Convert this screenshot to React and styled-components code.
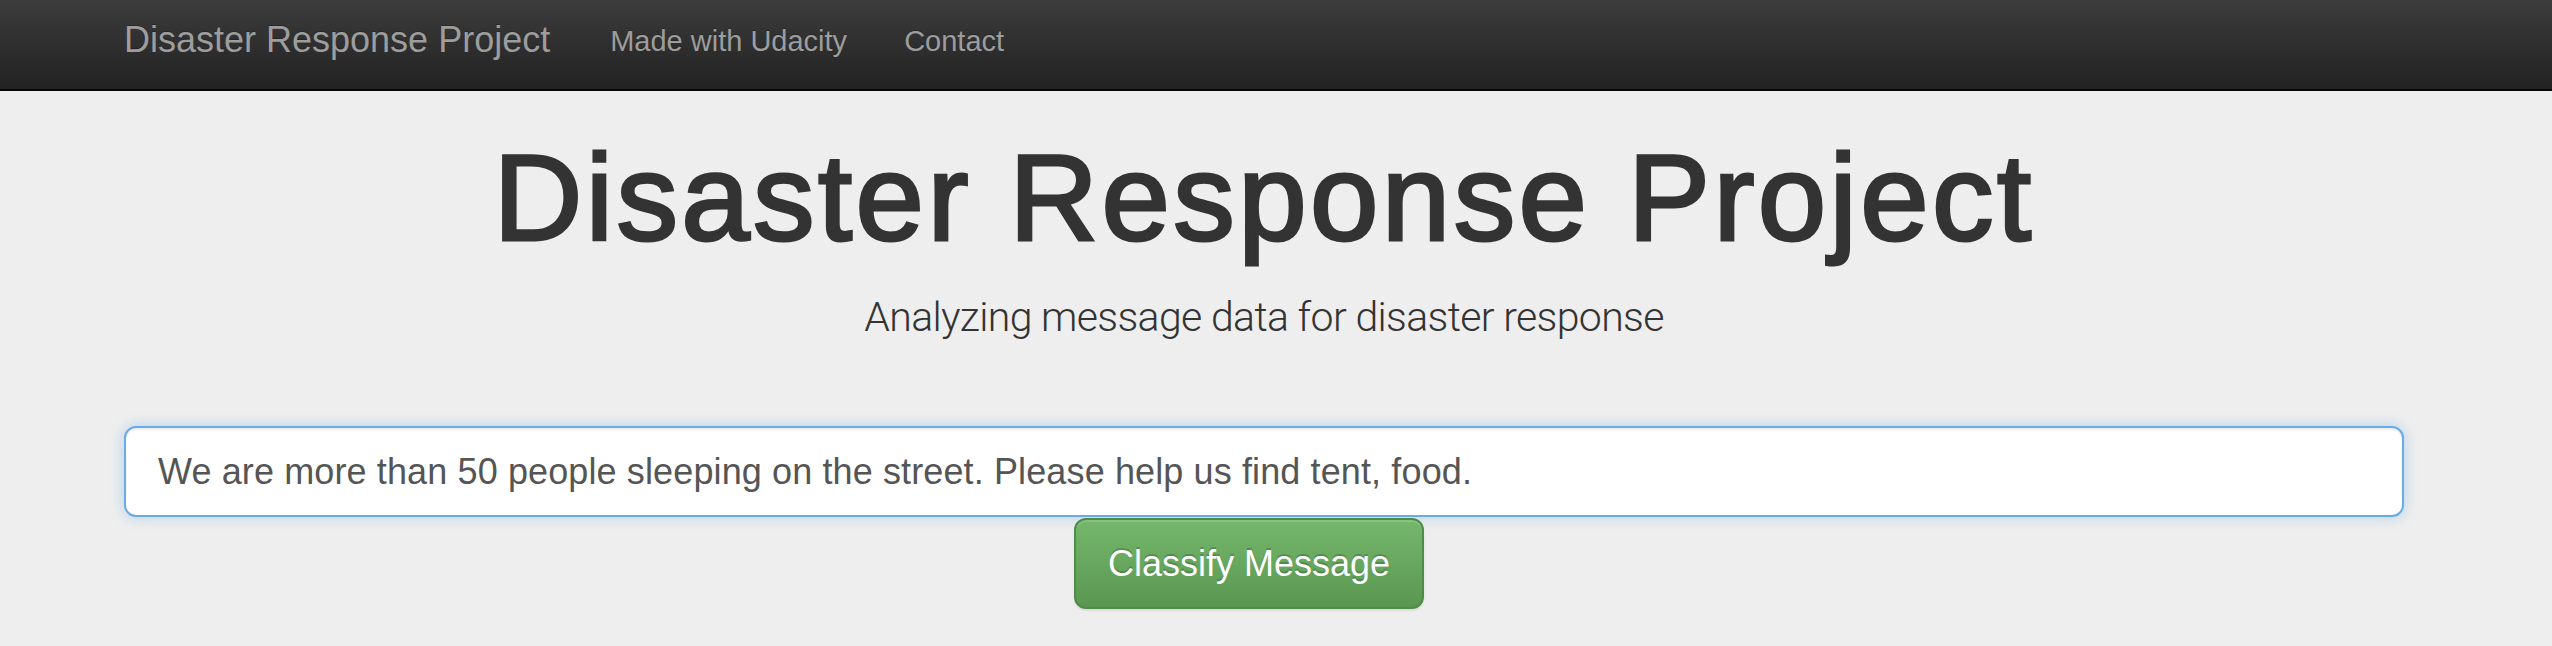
import React, { useEffect, useRef } from "react";
import styled, { createGlobalStyle } from "styled-components";

const GlobalStyle = createGlobalStyle`
  html, body {
    margin: 0;
    padding: 0;
    background: #eeeeee;
    font-family: "Liberation Sans", Arial, Helvetica, sans-serif;
  }
  * { box-sizing: border-box; }
`;

const Navbar = styled.nav`
  height: 91px;
  background: linear-gradient(to bottom, #3c3c3c 0%, #222222 100%);
  border-bottom: 2px solid #080808;
`;

const Container = styled.div`
  width: 2340px;
  margin-left: 94px;
  padding: 0 30px;
`;

const NavInner = styled(Container)`
  display: flex;
  align-items: flex-start;
`;

const Brand = styled.a`
  display: block;
  padding-top: 20px;
  font-size: 36px;
  line-height: 40px;
  color: #9d9d9d;
  text-decoration: none;
  white-space: nowrap;
  text-shadow: 0 -1px 0 rgba(0, 0, 0, 0.25);
`;

const NavList = styled.ul`
  display: flex;
  gap: 57px;
  margin: 0 0 0 60px;
  padding: 0;
  list-style: none;
`;

const NavLink = styled.a`
  display: block;
  padding-top: 21px;
  font-size: 29px;
  line-height: 40px;
  color: #9d9d9d;
  text-decoration: none;
  white-space: nowrap;
  text-shadow: 0 -1px 0 rgba(0, 0, 0, 0.25);
`;

const Jumbotron = styled.main`
  padding-top: 37px;
  padding-bottom: 40px;
`;

const Title = styled.h1`
  margin: 0;
  text-align: center;
  font-size: 123px;
  line-height: 140px;
  font-weight: 400;
  letter-spacing: 3.4px;
  color: #333333;
  -webkit-text-stroke: 3px #333333;
`;

const Lead = styled.p`
  margin: 19px 0 0;
  text-align: center;
  font-family: Roboto, "Liberation Sans", sans-serif;
  font-weight: 300;
  font-size: 41px;
  line-height: 60px;
  letter-spacing: -0.65px;
  color: #333333;
`;

const Form = styled.form`
  margin-top: 79px;
  display: flex;
  flex-direction: column;
`;

const MessageInput = styled.input`
  display: block;
  width: 100%;
  height: 91px;
  padding: 0 32px;
  font-family: "Liberation Sans", Arial, sans-serif;
  font-size: 36px;
  letter-spacing: 0.12px;
  color: #555555;
  background: #ffffff;
  border: 2px solid #6aaae6;
  border-radius: 12px;
  box-shadow: inset 0 2px 2px rgba(0, 0, 0, 0.075),
    0 0 14px rgba(102, 175, 233, 0.45);
  outline: none;
  caret-color: #333333;
`;

const ButtonRow = styled.div`
  margin-left: 41.6667%;
  padding-top: 1px;
`;

const SuccessButton = styled.button`
  height: 91px;
  padding: 0 32px;
  font-family: "Liberation Sans", Arial, sans-serif;
  font-size: 36px;
  color: #ffffff;
  background: linear-gradient(to bottom, #75b76d 0%, #5a9750 100%);
  border: 2px solid #4f8c48;
  border-radius: 12px;
  text-shadow: 0 -2px 0 rgba(0, 0, 0, 0.2);
  box-shadow: inset 0 2px 0 rgba(255, 255, 255, 0.15),
    0 2px 2px rgba(0, 0, 0, 0.075);
  cursor: pointer;
`;

const MESSAGE =
  "We are more than 50 people sleeping on the street. Please help us find tent, food.";

export default function App() {
  const inputRef = useRef(null);
  useEffect(() => {
    const el = inputRef.current;
    if (el) {
      el.focus();
      el.setSelectionRange(MESSAGE.length, MESSAGE.length);
    }
  }, []);

  return (
    <>
      <GlobalStyle />
      <Navbar>
        <NavInner>
          <Brand href="#">Disaster Response Project</Brand>
          <NavList>
            <li>
              <NavLink href="#">Made with Udacity</NavLink>
            </li>
            <li>
              <NavLink href="#">Contact</NavLink>
            </li>
          </NavList>
        </NavInner>
      </Navbar>
      <Jumbotron>
        <Container>
          <Title>Disaster Response Project</Title>
          <Lead>Analyzing message data for disaster response</Lead>
          <Form onSubmit={(e) => e.preventDefault()}>
            <MessageInput
              ref={inputRef}
              type="text"
              name="query"
              defaultValue={MESSAGE}
              placeholder="Enter a message to classify"
            />
            <ButtonRow>
              <SuccessButton type="submit">Classify Message</SuccessButton>
            </ButtonRow>
          </Form>
        </Container>
      </Jumbotron>
    </>
  );
}
